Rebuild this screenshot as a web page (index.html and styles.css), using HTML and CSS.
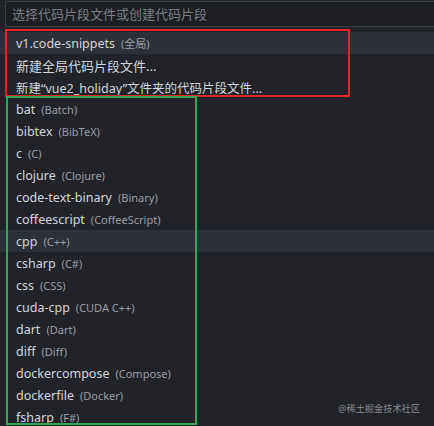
FILE: index.html
```html
<!DOCTYPE html>
<html>
<head>
<meta charset="utf-8">
<link rel="stylesheet" href="styles.css">
</head>
<body>
<div class="picker">
  <div class="input"><span class="placeholder">选择代码片段文件或创建代码片段</span></div>
  <ul class="list">
    <li class="row active"><span class="label">v1.code-snippets</span><span class="desc">(全局)</span></li>
    <li class="row cjk"><span class="label">新建全局代码片段文件...</span></li>
    <li class="row"><span class="label">新建“vue2_holiday”文件夹的代码片段文件...</span></li>
    <li class="row"><span class="label">bat</span><span class="desc">(Batch)</span></li>
    <li class="row"><span class="label">bibtex</span><span class="desc">(BibTeX)</span></li>
    <li class="row"><span class="label">c</span><span class="desc">(C)</span></li>
    <li class="row"><span class="label">clojure</span><span class="desc">(Clojure)</span></li>
    <li class="row"><span class="label">code-text-binary</span><span class="desc">(Binary)</span></li>
    <li class="row"><span class="label">coffeescript</span><span class="desc">(CoffeeScript)</span></li>
    <li class="row hover"><span class="label">cpp</span><span class="desc">(C++)</span></li>
    <li class="row"><span class="label">csharp</span><span class="desc">(C#)</span></li>
    <li class="row"><span class="label">css</span><span class="desc">(CSS)</span></li>
    <li class="row"><span class="label">cuda-cpp</span><span class="desc">(CUDA C++)</span></li>
    <li class="row"><span class="label">dart</span><span class="desc">(Dart)</span></li>
    <li class="row"><span class="label">diff</span><span class="desc">(Diff)</span></li>
    <li class="row"><span class="label">dockercompose</span><span class="desc">(Compose)</span></li>
    <li class="row"><span class="label">dockerfile</span><span class="desc">(Docker)</span></li>
    <li class="row"><span class="label">fsharp</span><span class="desc">(F#)</span></li>
  </ul>
  <div class="mark mark-red"></div>
  <div class="mark mark-green"></div>
  <div class="watermark">@稀土掘金技术社区</div>
</div>
</body>
</html>
```

FILE: styles.css
```css
html, body {
  margin: 0;
  padding: 0;
  background: #212328;
}
body {
  width: 434px;
  height: 426px;
  overflow: hidden;
  font-family: "Noto Sans", "Noto Sans CJK SC", sans-serif;
  color: #d3d6db;
}
.picker {
  position: relative;
  height: 426px;
  padding-top: 1px;
}
.input {
  margin-left: 5px;
  height: 24px;
  border: 1px solid #3a3d43;
  border-right: none;
  background: #1c1e22;
  display: flex;
  align-items: center;
  padding-left: 6px;
}
.placeholder {
  font-size: 13px;
  color: #7b7e84;
  padding-bottom: 1px;
}
.list {
  list-style: none;
  margin: 5px 0 0 0;
  padding: 0;
}
.row {
  height: 22px;
  display: flex;
  align-items: center;
  padding-left: 16px;
  font-size: 12.5px;
  white-space: nowrap;
}
.row.cjk {
  font-size: 13px;
}
.row.active, .row.hover {
  background: #2c3038;
}
.desc {
  margin-left: 6px;
  font-size: 11px;
  color: #9b9ea4;
}
.mark {
  position: absolute;
  box-sizing: border-box;
  border: 2px solid;
}
.mark-red {
  left: 5px;
  top: 29px;
  width: 345px;
  height: 68px;
  border-color: #e0252d;
}
.mark-green {
  left: 6px;
  top: 96px;
  width: 191px;
  height: 329px;
  border-color: #2fa85a;
}
.watermark {
  position: absolute;
  right: 14px;
  top: 401px;
  font-size: 9.2px;
  color: #85888d;
}
```
